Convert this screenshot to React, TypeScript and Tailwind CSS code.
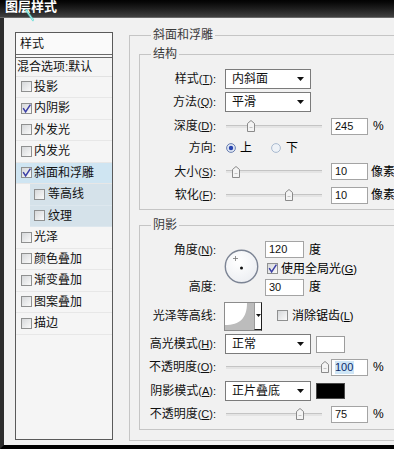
import React from "react";

const FONT = "font-['Liberation_Sans','Noto_Sans_CJK_SC',sans-serif]";

function Check({ checked }: { checked?: boolean }) {
  return (
    <span className="relative inline-block w-[11px] h-[11px] shrink-0 border border-[#8f9090] bg-linear-to-br from-[#d6d8da] to-[#fafafa]">
      {checked && (
        <svg viewBox="0 0 11 11" width="11" height="11" className="absolute left-[-1px] top-[-1px]">
          <path d="M2.2 5.2 L4.6 8.8 L9.4 1.6" stroke="#3b3fa6" strokeWidth="1.5" fill="none" />
        </svg>
      )}
    </span>
  );
}

function Label({ t, k }: { t: string; k?: string }) {
  return (
    <span className="w-[76px] shrink-0 text-right text-[12px] leading-[14px] text-[#111] whitespace-nowrap">
      {t}
      {k ? (
        <span className="text-[11px]">
          (<span className="underline underline-offset-1">{k}</span>):
        </span>
      ) : (
        ":"
      )}
    </span>
  );
}

function Select({ text }: { text: string }) {
  return (
    <div className="ml-[9px] w-[86px] h-[20px] border border-[#7b7b7b] bg-white flex items-center justify-between pl-[6px] pr-[6px] shrink-0">
      <span className="text-[12px] leading-[14px] text-[#111]">{text}</span>
      <svg width="7" height="4" viewBox="0 0 7 4">
        <path d="M0 0H7L3.5 4Z" fill="#111" />
      </svg>
    </div>
  );
}

function Input({ v, w = 37, sel }: { v: string; w?: number; sel?: boolean }) {
  return (
    <div
      className="h-[17px] border border-[#a4a4a4] bg-white flex items-center pl-[3px] text-[11px] leading-[13px] text-[#111] shrink-0"
      style={{ width: w }}
    >
      {sel ? <span className="bg-[#cfe6f6] text-[#0d2a6a] pr-[1px]">{v}</span> : v}
    </div>
  );
}

function Slider({ pos }: { pos: number }) {
  return (
    <div className="relative ml-[10px] w-[96px] h-[12px] flex items-center shrink-0">
      <div className="w-full h-[3px] bg-[#e4e4e4] border-t border-[#c4c4c4]" />
      <svg className="absolute top-0" style={{ left: pos }} width="8" height="12" viewBox="0 0 8 12">
        <path d="M0.5 11.5 V3.5 L4 0.5 L7.5 3.5 V11.5 Z" fill="#f4f4f4" stroke="#8a8a8a" />
        <path d="M2.5 7.5 H5.5" stroke="#c4c4c4" />
      </svg>
    </div>
  );
}

function Radio({ on }: { on?: boolean }) {
  return (
    <svg width="10" height="10" viewBox="0 0 10 10" className="shrink-0">
      <circle cx="5" cy="5" r="4.4" fill={on ? "#dfe6f2" : "#eef2f7"} stroke={on ? "#6a7fb0" : "#a9b9cf"} />
      {on && <circle cx="5" cy="5" r="2.2" fill="#2844b0" />}
    </svg>
  );
}

function ListItem({ t, checked, hl }: { t: string; checked?: boolean; hl?: boolean }) {
  return (
    <div
      className={
        "h-[21.5px] flex items-center pl-[5px] border-b border-[#e7e7e7] " + (hl ? "bg-[#cfe5f2]" : "")
      }
    >
      <Check checked={checked} />
      <span className="ml-[2px] text-[12px] leading-[14px] text-[#111]">{t}</span>
    </div>
  );
}

function SubItem({ t }: { t: string }) {
  return (
    <div className="h-[21.5px] flex">
      <div className="w-[14px] shrink-0" />
      <div className="flex-1 flex items-center pl-[4px] bg-[#d5e2ea] border-b border-[#dde7ee]">
        <Check />
        <span className="ml-[3px] text-[12px] leading-[14px] text-[#111]">{t}</span>
      </div>
    </div>
  );
}

export default function App() {
  return (
    <div className={"relative w-[394px] h-[449px] overflow-hidden bg-black flex flex-col " + FONT}>
      {/* title bar */}
      <div className="h-[18px] shrink-0 overflow-hidden bg-linear-to-b from-[#030303] to-[#404040] pl-[5px] border-b border-[#6a6a6a]">
        <div className="mt-[0px] text-white font-bold text-[13px] leading-[14px]">图层样式</div>
      </div>

      {/* body */}
      <div className="flex-1 flex items-start overflow-hidden bg-[#f1f1f1] border-l-[4px] border-l-[#2c2c2c] border-b-[4px] border-b-black">
        {/* left list */}
        <div className="ml-[11px] mt-[14px] w-[98px] h-[408px] shrink-0 border border-[#5a5a5a] bg-[#f5f5f5] flex flex-col">
          <div className="h-[21px] flex items-center pl-[4px] bg-[#fafafa]">
            <span className="text-[12px] leading-[14px] text-[#111]">样式</span>
          </div>
          <div className="h-[4px] border-y border-[#6a6a6a] bg-[#f8f8f8]" />
          <div className="h-[18.5px] flex items-center pl-[1px] border-b border-[#e2e2e2]">
            <span className="text-[12px] leading-[14px] text-[#111]">混合选项:默认</span>
          </div>
          <ListItem t="投影" />
          <ListItem t="内阴影" checked />
          <ListItem t="外发光" />
          <ListItem t="内发光" />
          <ListItem t="斜面和浮雕" checked hl />
          <SubItem t="等高线" />
          <SubItem t="纹理" />
          <ListItem t="光泽" />
          <ListItem t="颜色叠加" />
          <ListItem t="渐变叠加" />
          <ListItem t="图案叠加" />
          <ListItem t="描边" />
        </div>

        {/* right panel */}
        <fieldset className="ml-[16px] mt-[10px] w-[300px] shrink-0 border border-[#c5c5c5] pl-[9px] pt-[5px] pb-[10px]">
          <legend className="ml-[12px] px-[2px] text-[12px] leading-[14px] text-[#3a3a3a]">斜面和浮雕</legend>

          {/* 结构 */}
          <fieldset className="w-[290px] border border-[#c5c5c5] pt-[8px] pb-[3px]">
            <legend className="ml-[11px] px-[2px] text-[12px] leading-[14px] text-[#3a3a3a]">结构</legend>
            <div className="h-[20px] flex items-center">
              <Label t="样式" k="T" />
              <Select text="内斜面" />
            </div>
            <div className="mt-[3px] h-[20px] flex items-center">
              <Label t="方法" k="Q" />
              <Select text="平滑" />
            </div>
            <div className="mt-[4px] h-[20px] flex items-center">
              <Label t="深度" k="D" />
              <Slider pos={21} />
              <div className="ml-[9px]">
                <Input v="245" />
              </div>
              <span className="ml-[5px] text-[12px]">%</span>
            </div>
            <div className="h-[23px] flex items-center">
              <Label t="方向" />
              <span className="ml-[10px]">
                <Radio on />
              </span>
              <span className="ml-[4px] text-[12px] leading-[14px]">上</span>
              <span className="ml-[19px]">
                <Radio />
              </span>
              <span className="ml-[5px] text-[12px] leading-[14px]">下</span>
            </div>
            <div className="h-[25px] flex items-center">
              <Label t="大小" k="S" />
              <Slider pos={6} />
              <div className="ml-[9px]">
                <Input v="10" />
              </div>
              <span className="ml-[3px] text-[12px] whitespace-nowrap">像素</span>
            </div>
            <div className="h-[22px] flex items-center">
              <Label t="软化" k="F" />
              <Slider pos={59} />
              <div className="ml-[9px]">
                <Input v="10" />
              </div>
              <span className="ml-[3px] text-[12px] whitespace-nowrap">像素</span>
            </div>
          </fieldset>

          {/* 阴影 */}
          <fieldset className="mt-[8px] w-[290px] border border-[#c5c5c5] pt-[8px] pb-[4px]">
            <legend className="ml-[11px] px-[2px] text-[12px] leading-[14px] text-[#3a3a3a]">阴影</legend>
            <div className="flex">
              <div className="w-[76px] flex flex-col">
                <div className="h-[19px] flex items-center">
                  <Label t="角度" k="N" />
                </div>
                <div className="h-[19px]" />
                <div className="h-[18px] flex items-center">
                  <Label t="高度" />
                </div>
              </div>
              <svg className="ml-[8px] mt-[9px] shrink-0" width="35" height="35" viewBox="0 0 35 35">
                <defs>
                  <radialGradient id="dg" cx="0.4" cy="0.35" r="0.7">
                    <stop offset="0" stopColor="#ffffff" />
                    <stop offset="1" stopColor="#eceef2" />
                  </radialGradient>
                </defs>
                <circle cx="17.5" cy="17.5" r="16.2" fill="url(#dg)" stroke="#7c8494" strokeWidth="1.4" />
                <path d="M11.5 7 V12 M9 9.5 H14" stroke="#777" strokeWidth="0.8" />
                <circle cx="17.5" cy="19" r="1.5" fill="#111" />
              </svg>
              <div className="ml-[6px] flex flex-col">
                <div className="h-[19px] flex items-center">
                  <Input v="120" w={39} />
                  <span className="ml-[5px] text-[12px] leading-[14px]">度</span>
                </div>
                <div className="h-[19px] flex items-center pl-[2px]">
                  <Check checked />
                  <span className="ml-[3px] text-[12px] leading-[14px] whitespace-nowrap">
                    使用全局光<span className="text-[11px]">(<span className="underline underline-offset-1">G</span>)</span>
                  </span>
                </div>
                <div className="h-[18px] flex items-center">
                  <Input v="30" w={39} />
                  <span className="ml-[5px] text-[12px] leading-[14px]">度</span>
                </div>
              </div>
            </div>

            <div className="mt-[5px] h-[30px] flex items-center">
              <Label t="光泽等高线" />
              <div className="ml-[8px] w-[38px] h-[29px] shrink-0 flex border border-[#8c8c8c] border-r-[#1e1e1e] bg-white">
                <svg width="29" height="27" viewBox="0 0 29 27" className="shrink-0">
                  <path d="M0 27 V22 C15 22 22 15 22 0 H29 V27 Z" fill="#bcbcbc" />
                </svg>
                <div className="flex-1 flex items-center justify-center border-l border-[#9a9a9a] border-b border-b-[#1e1e1e]">
                  <svg width="5" height="3" viewBox="0 0 5 3">
                    <path d="M0 0H5L2.5 3Z" fill="#111" />
                  </svg>
                </div>
              </div>
              <span className="ml-[15px]">
                <Check />
              </span>
              <span className="ml-[4px] text-[12px] leading-[14px] whitespace-nowrap">
                消除锯齿<span className="text-[11px]">(<span className="underline underline-offset-1">L</span>)</span>
              </span>
            </div>

            <div className="mt-[2px] h-[22px] flex items-center">
              <Label t="高光模式" k="H" />
              <Select text="正常" />
              <div className="ml-[5px] w-[29px] h-[17px] shrink-0 border border-[#9c9c9c] bg-white" />
            </div>
            <div className="h-[24px] flex items-center">
              <Label t="不透明度" k="O" />
              <Slider pos={95} />
              <div className="ml-[9px]">
                <Input v="100" sel />
              </div>
              <span className="ml-[5px] text-[12px]">%</span>
            </div>
            <div className="h-[24px] flex items-center">
              <Label t="阴影模式" k="A" />
              <Select text="正片叠底" />
              <div className="ml-[5px] w-[29px] h-[16px] shrink-0 border border-[#4a4a4a] bg-black" />
            </div>
            <div className="h-[22px] flex items-center">
              <Label t="不透明度" k="C" />
              <Slider pos={70} />
              <div className="ml-[9px]">
                <Input v="75" />
              </div>
              <span className="ml-[5px] text-[12px]">%</span>
            </div>
          </fieldset>
        </fieldset>
      </div>

      {/* glint on title */}
      <svg className="absolute left-[24px] top-[8px]" width="12" height="14" viewBox="0 0 12 14">
        <path d="M2 2 L9 12" stroke="#4fd6d0" strokeWidth="2.2" strokeLinecap="round" opacity="0.75" />
        <path d="M2 2 L9 12" stroke="#c8fff8" strokeWidth="0.8" strokeLinecap="round" />
      </svg>
    </div>
  );
}
